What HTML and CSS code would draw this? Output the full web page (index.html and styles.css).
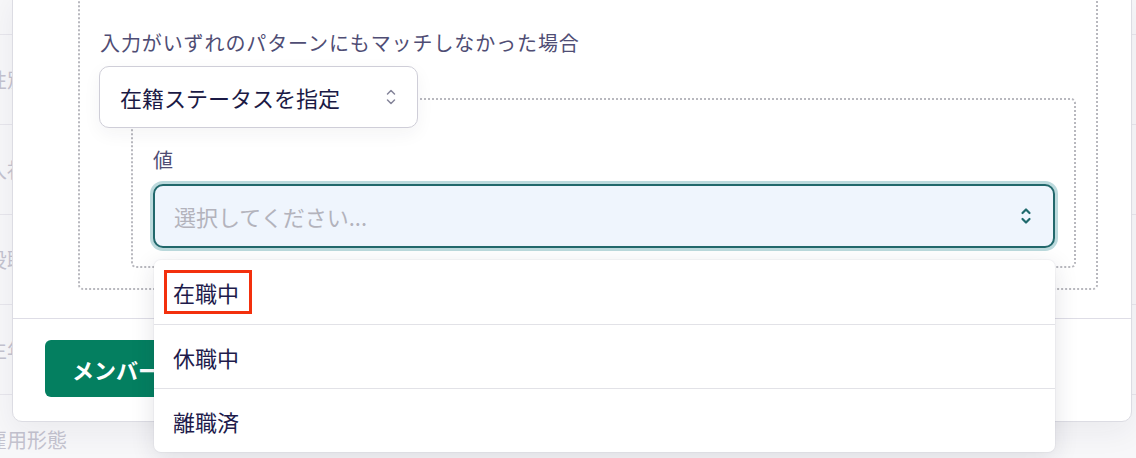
FILE: index.html
```html
<!DOCTYPE html>
<html lang="ja">
<head>
<meta charset="utf-8">
<title>ルール設定</title>
<link rel="stylesheet" href="styles.css">
</head>
<body>
<div class="page">
  <ul class="field-list">
    <li class="field-row"><span class="field-name">氏名</span></li>
    <li class="field-row"><span class="field-name">性別</span></li>
    <li class="field-row"><span class="field-name">入社日</span></li>
    <li class="field-row"><span class="field-name">役職</span></li>
    <li class="field-row"><span class="field-name">生年月日</span></li>
    <li class="field-row"><span class="field-name">雇用形態</span></li>
  </ul>

  <div class="dialog">
    <div class="dialog-body">
      <div class="rule-box">
        <p class="rule-label">入力がいずれのパターンにもマッチしなかった場合</p>
        <div class="select select-mode">
          <span class="select-text">在籍ステータスを指定</span>
          <svg class="chevrons" width="12" height="20" viewBox="0 0 12 20" aria-hidden="true">
            <path d="M2.5 7 L6 3.5 L9.5 7 M2.5 13 L6 16.5 L9.5 13" fill="none" stroke="#85859a" stroke-width="1.5" stroke-linecap="round" stroke-linejoin="round"/>
          </svg>
        </div>
        <div class="value-box">
          <div class="field-label">値</div>
          <div class="combo">
            <div class="select select-value">
              <span class="placeholder">選択してください...</span>
              <svg class="chevrons" width="12" height="20" viewBox="0 0 12 20" aria-hidden="true">
                <path d="M2.5 7 L6 3.5 L9.5 7 M2.5 13 L6 16.5 L9.5 13" fill="none" stroke="#1f6a6d" stroke-width="2.2" stroke-linecap="round" stroke-linejoin="round"/>
              </svg>
            </div>
            <ul class="menu">
              <li class="menu-item"><span class="marked">在職中</span></li>
              <li class="menu-item">休職中</li>
              <li class="menu-item">離職済</li>
            </ul>
          </div>
        </div>
      </div>
    </div>
    <div class="dialog-footer">
      <button class="btn-primary" type="button">メンバーを追加</button>
    </div>
  </div>
</div>
</body>
</html>
```

FILE: styles.css
```css
* {
  box-sizing: border-box;
}

html,
body {
  margin: 0;
  height: 100%;
  overflow: hidden;
}

body {
  background: #f7f7f9;
  font-family: "Noto Sans CJK JP", "Noto Sans", sans-serif;
  color: #1d1b4a;
}

.page {
  position: relative;
  display: flow-root;
  height: 100%;
}

/* Field list of the page behind the dialog */
.field-list {
  list-style: none;
  margin: -55px 0 0;
  padding: 0;
}

.field-row {
  height: 90px;
  display: flex;
  align-items: center;
  border-bottom: 1px solid #e7e6ec;
}

.field-name {
  margin-left: -13px;
  font-size: 20px;
  color: #c4c3cf;
}

/* Dialog */
.dialog {
  position: absolute;
  top: -10px;
  left: 12px;
  width: 1120px;
  background: #fff;
  border: 1px solid #dcdce3;
  border-radius: 10px;
  box-shadow: 0 10px 30px rgba(30, 30, 60, 0.06);
}

.dialog-body {
  padding: 0 33px 28px 65px;
}

.rule-box {
  border: 2px dotted #b8b8be;
  border-top: none;
  border-radius: 0 0 5px 5px;
  padding: 38px 20px 20px;
}

.rule-label {
  margin: 0 0 9px;
  font-size: 20px;
  line-height: 28px;
  letter-spacing: 0.9px;
  color: #4f4d74;
}

.select {
  display: flex;
  align-items: center;
  justify-content: space-between;
  border-radius: 10px;
  font-size: 22px;
}

.select-mode {
  position: relative;
  z-index: 1;
  width: 319px;
  height: 62px;
  margin-left: -1px;
  padding: 0 20px 0 20px;
  background: #fff;
  border: 1px solid #cfced8;
  box-shadow: 0 6px 18px rgba(30, 30, 60, 0.05);
  color: #1b1a45;
}

.value-box {
  margin: -30px 0 0 31px;
  border: 2px dotted #b8b8be;
  border-radius: 5px;
  padding: 46px 19px 18px 20px;
}

.field-label {
  margin: 0 0 10px;
  font-size: 20px;
  line-height: 28px;
  color: #4f4d74;
}

.combo {
  position: relative;
}

.select-value {
  height: 64px;
  padding: 0 21px 0 19px;
  background: #eff5fd;
  border: 2px solid #22686c;
  box-shadow: 0 0 0 3px #bcdadd;
}

.placeholder {
  color: #b3b3bc;
}

/* Options popup */
.menu {
  position: absolute;
  z-index: 5;
  top: calc(100% + 12px);
  left: 1px;
  right: 0;
  margin: 0;
  padding: 0;
  list-style: none;
  background: #fff;
  border-radius: 7px;
  box-shadow: 0 6px 24px rgba(30, 30, 60, 0.12), 0 0 0 1px rgba(30, 30, 60, 0.03);
}

.menu-item {
  height: 64px;
  display: flex;
  align-items: center;
  padding-left: 19px;
  font-size: 22px;
  line-height: 30px;
  color: #1e1b4b;
}

.menu-item + .menu-item {
  border-top: 1px solid #e2e2e7;
}

.marked {
  position: relative;
}

.marked::after {
  content: "";
  position: absolute;
  top: -7px;
  bottom: -7px;
  left: -9px;
  right: -13px;
  border: 3px solid #f3300d;
}

/* Footer */
.dialog-footer {
  border-top: 1px solid #dedde6;
  padding: 21px 32px 24px;
}

.btn-primary {
  display: block;
  height: 57px;
  padding: 0 27px;
  border: none;
  border-radius: 6px;
  background: #047f60;
  color: #fff;
  font-family: "Noto Sans CJK JP", "Noto Sans", sans-serif;
  font-size: 22px;
  font-weight: 700;
}
```
